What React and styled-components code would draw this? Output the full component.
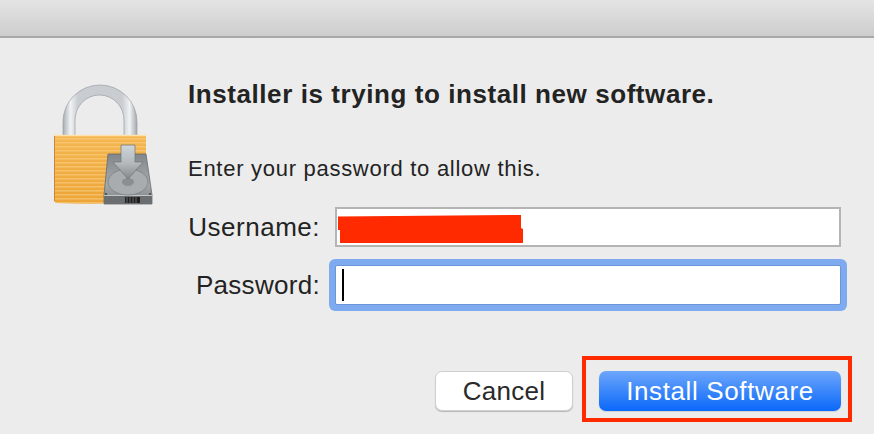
import React from 'react';
import styled, { createGlobalStyle } from 'styled-components';

const GlobalStyle = createGlobalStyle`
    html, body {
        margin: 0;
        padding: 0;
        background: #ececec;
    }
    * {
        box-sizing: border-box;
    }
`;

const Window = styled.div`
    width: 874px;
    height: 434px;
    overflow: hidden;
    background: #ececec;
    font-family: "Liberation Sans", Arial, sans-serif;
    color: #232323;
`;

const TitleBar = styled.div`
    height: 38px;
    background: linear-gradient(#e4e4e4, #cdcdcd);
    border-bottom: 2px solid #a8a8a8;
`;

const Body = styled.div`
    display: flex;
    padding: 42px 33px 0 50px;
`;

const IconColumn = styled.div`
    flex: 0 0 138px;
`;

const Content = styled.div`
    flex: 1;
    display: flex;
    flex-direction: column;
`;

const Title = styled.h1`
    margin: 0;
    font-size: 26px;
    line-height: 28px;
    font-weight: 700;
    letter-spacing: 0.57px;
    white-space: nowrap;
`;

const Message = styled.p`
    margin: 48px 0 0;
    font-size: 22px;
    line-height: 26px;
    letter-spacing: 0.72px;
    white-space: nowrap;
`;

const Form = styled.div`
    display: grid;
    grid-template-columns: 132px 506px;
    column-gap: 15px;
    row-gap: 18px;
    margin-top: 25px;
`;

const Label = styled.label`
    justify-self: end;
    align-self: center;
    font-size: 26px;
    line-height: 40px;
    letter-spacing: ${(props) => props.$spacing}px;
`;

const Field = styled.div`
    height: 40px;
    display: flex;
    align-items: center;
    background: #fff;
    border: ${(props) => (props.$focused ? '1px solid #6c96d8' : '2px solid #b4b4b4')};
    box-shadow: ${(props) => (props.$focused ? '0 0 0 6px #7eabf0' : 'none')};
    border-radius: ${(props) => (props.$focused ? '2px' : '0')};
    padding-left: ${(props) => (props.$focused ? '6px' : '1px')};
`;

const Caret = styled.span`
    width: 2px;
    height: 32px;
    background: #000;
`;

const Footer = styled.div`
    display: flex;
    justify-content: flex-end;
    align-items: center;
    gap: 26px;
    margin-top: 66px;
`;

const Button = styled.button`
    height: 40px;
    padding: 0;
    border-radius: 7px;
    font-family: inherit;
    font-size: 26px;
    cursor: pointer;
`;

const CancelButton = styled(Button)`
    width: 138px;
    color: #2a2a2a;
    background: #fff;
    border: 1px solid #cfcfcf;
    box-shadow: 0 1px 1px rgba(0, 0, 0, 0.22);
    letter-spacing: 0.3px;
`;

const InstallButton = styled(Button)`
    display: block;
    width: 100%;
    color: #fff;
    border: none;
    background: linear-gradient(#6da6fb, #0a68fa);
    box-shadow: 0 1px 1px rgba(0, 0, 0, 0.12);
    letter-spacing: 0.62px;
`;

const Highlight = styled.div`
    position: relative;
    width: 242px;
    &::after {
        content: '';
        position: absolute;
        inset: -15px -11px -11px -17px;
        border: 4px solid #ff2a00;
        pointer-events: none;
    }
`;

function LockIcon() {
    return (
        <svg width="110" height="130" viewBox="50 78 110 130">
            <defs>
                <linearGradient id="shackle" x1="0" y1="0" x2="1" y2="0">
                    <stop offset="0" stopColor="#a9adb2" />
                    <stop offset="0.1" stopColor="#f0f2f4" />
                    <stop offset="0.2" stopColor="#c9cdd2" />
                    <stop offset="0.8" stopColor="#c9cdd2" />
                    <stop offset="0.9" stopColor="#f0f2f4" />
                    <stop offset="1" stopColor="#a4a8ad" />
                </linearGradient>
                <linearGradient id="brass" x1="0" y1="0" x2="0" y2="1">
                    <stop offset="0" stopColor="#f5b650" />
                    <stop offset="1" stopColor="#eda437" />
                </linearGradient>
                <pattern id="stripes" width="4" height="4" patternUnits="userSpaceOnUse">
                    <rect width="4" height="1.6" fill="#f9cf80" opacity="0.6" />
                </pattern>
                <linearGradient id="disk" x1="0" y1="0" x2="0" y2="1">
                    <stop offset="0" stopColor="#82878b" />
                    <stop offset="0.6" stopColor="#a6aaad" />
                    <stop offset="1" stopColor="#7c8083" />
                </linearGradient>
                <linearGradient id="arrow" x1="0" y1="0" x2="0" y2="1">
                    <stop offset="0" stopColor="#cdd6da" />
                    <stop offset="0.55" stopColor="#b4b8bb" />
                    <stop offset="1" stopColor="#83878a" />
                </linearGradient>
            </defs>
            <path
                d="M63 134 V120 A37 37 0 0 1 137 120 V134 H124 V118 A24.5 25 0 0 0 75 118 V134 Z"
                fill="url(#shackle)"
                stroke="#9a9ea3"
                strokeWidth="0.7"
            />
            <path d="M54 134 H146 V200 Q100 203 56 201 L54 199 Z" fill="url(#brass)" />
            <path d="M54 134 H146 V200 Q100 203 56 201 L54 199 Z" fill="url(#stripes)" />
            <path d="M54 133.5 H146" stroke="#fbe2ae" strokeWidth="1.5" />
            <path d="M54.5 134 V199" stroke="#c98a2f" strokeWidth="1" />
            <path d="M108 152 H146 L152 193 V202 H104 V193 Z" fill="url(#disk)" stroke="#65696c" strokeWidth="0.8" />
            <path d="M104 194 H152 V202 H104 Z" fill="#6a6e71" />
            <path d="M104 193.5 H152" stroke="#c2c5c7" strokeWidth="1" />
            <ellipse cx="128" cy="180" rx="20" ry="13" fill="#a8acaf" stroke="#7b7f82" strokeWidth="0.8" />
            <ellipse cx="128" cy="180" rx="6" ry="4" fill="#8b8f92" />
            <path d="M121 143 H135 V160 H143 L128 177 L113 160 H121 Z" fill="url(#arrow)" stroke="#6f7376" strokeWidth="0.7" />
            <path d="M125 195 H140 V201 H125 Z" fill="#1f1f1f" />
            <path d="M127 195 V201 M130 195 V201 M133 195 V201 M136 195 V201" stroke="#8a8a8a" strokeWidth="0.7" />
            <circle cx="106" cy="192" r="1" fill="#404346" />
            <circle cx="150" cy="192" r="1" fill="#404346" />
        </svg>
    );
}

function RedactedName() {
    return (
        <svg width="186" height="36" viewBox="0 0 186 36">
            <path d="M0 7.5 L183 6 L183 19 L185 20 L185 34 L2 34 L2 21 L0 21 Z" fill="#ff2a00" />
        </svg>
    );
}

export default function App() {
    return (
        <Window>
            <GlobalStyle />
            <TitleBar />
            <Body>
                <IconColumn>
                    <LockIcon />
                </IconColumn>
                <Content>
                    <Title>Installer is trying to install new software.</Title>
                    <Message>Enter your password to allow this.</Message>
                    <Form>
                        <Label $spacing={0.5}>Username:</Label>
                        <Field>
                            <RedactedName />
                        </Field>
                        <Label $spacing={0.3}>Password:</Label>
                        <Field $focused>
                            <Caret />
                        </Field>
                    </Form>
                    <Footer>
                        <CancelButton>Cancel</CancelButton>
                        <Highlight>
                            <InstallButton>Install Software</InstallButton>
                        </Highlight>
                    </Footer>
                </Content>
            </Body>
        </Window>
    );
}
